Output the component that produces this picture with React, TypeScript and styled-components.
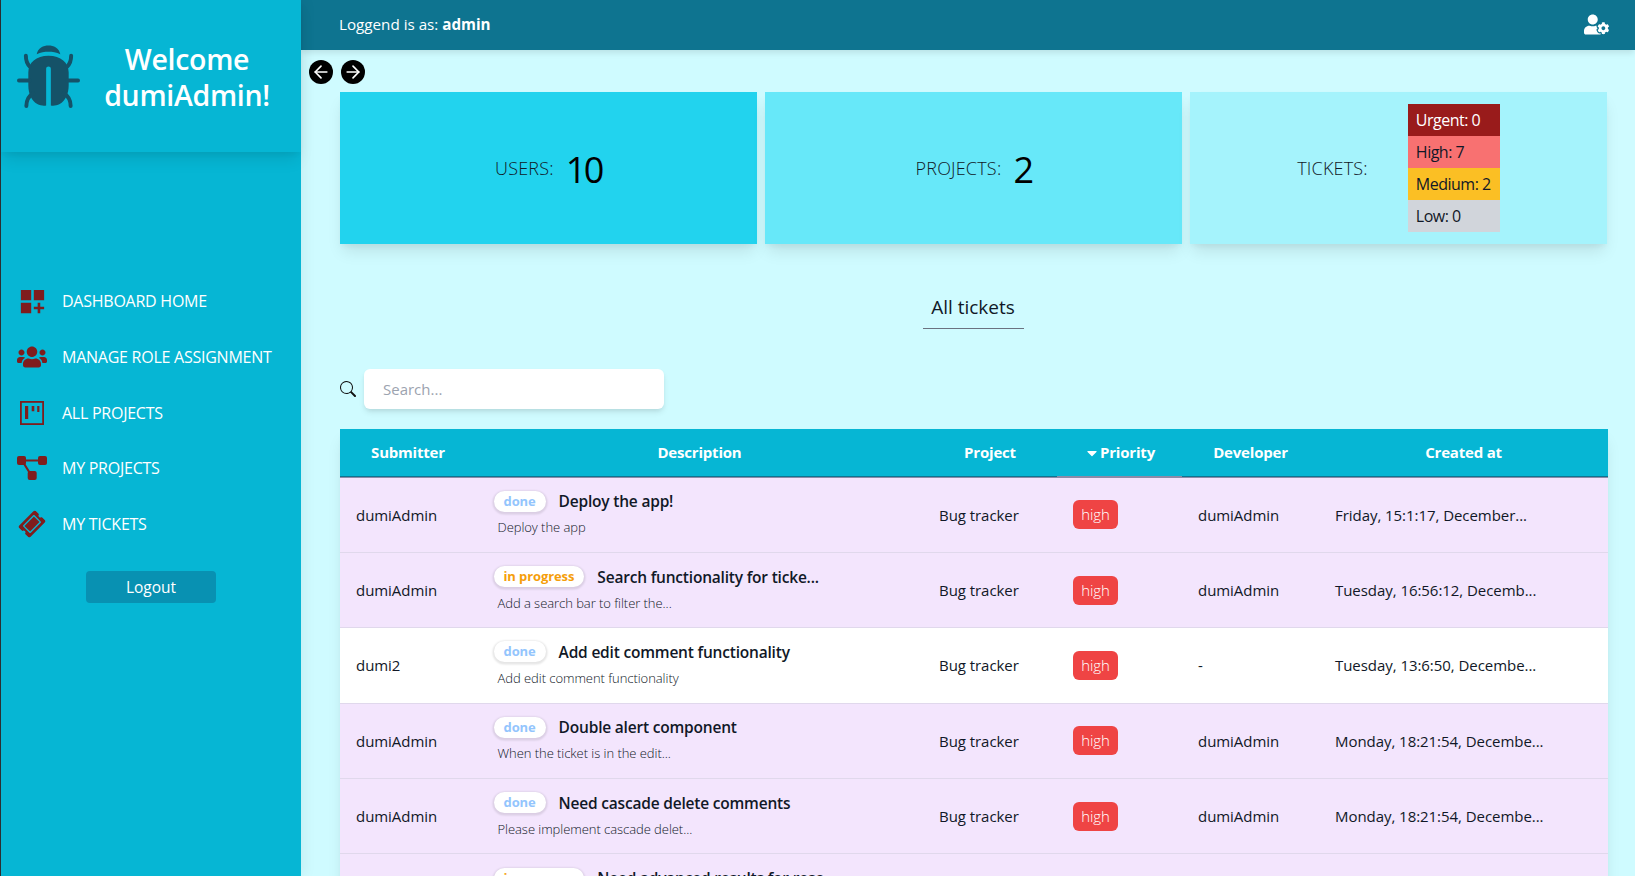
import * as React from "react";
import styled, { createGlobalStyle } from "styled-components";
import { BsSearch } from "react-icons/bs";
import { FiArrowLeft, FiArrowRight } from "react-icons/fi";
import { MdDashboardCustomize } from "react-icons/md";
import { FaUsers, FaUserCog, FaCaretDown, FaTicketAlt } from "react-icons/fa";

const GlobalStyle = createGlobalStyle`
  html, body {
    margin: 0;
    height: 100%;
    overflow: hidden;
    background: #cffbff;
    font-family: "Open Sans", "Noto Sans", "Liberation Sans", sans-serif;
    color: #111827;
  }
  * { box-sizing: border-box; }
`;

const BugIcon = () => (
  <svg width="63" height="63" viewBox="0 0 64 64" fill="#155268" style={{ flex: "none" }}>
    <path d="M20 9.500C21 3 27 0.500 32 0.500s11 2.500 12 9c-4-2-8-2.600-12-2.600s-8 .600-12 2.600z" />
    <path d="M29.600 61.500c-2 .500-6 .300-9-1.500C15 57 11.500 50 11.500 41V28C11.500 18 19.500 11 32 11s20.500 7 20.500 17v13c0 9-3.500 16-9.100 19-3 1.800-7 2-9 1.500V24c0-3-4.800-3-4.800 0z" />
    <g fill="none" stroke="#155268" strokeWidth="4" strokeLinecap="round" strokeLinejoin="round">
      <path d="M9 11c0 4 1 8 4 11M55 11c0 4-1 8-4 11" />
      <path d="M2 36h11M62 36H51" />
      <path d="M9.500 62c0-6 2-10 7-13M54.500 62c0-6-2-10-7-13" />
    </g>
  </svg>
);

const BoardIcon = () => (
  <svg width="24" height="24" viewBox="0 0 24 24">
    <rect x="0.900" y="0.900" width="22.200" height="22.200" fill="none" stroke="#7f1d1d" strokeWidth="1.800" />
    <path fill="#7f1d1d" d="M5 5h3.200v13H5zM11.700 5h2.600v5.200h-2.600zM17.200 5h2.200v6h-2.200z" />
  </svg>
);

const DiagramIcon = () => (
  <svg width="30" height="24" viewBox="0 0 30 24" fill="#7f1d1d">
    <rect x="0" y="0" width="9" height="9" rx="2" />
    <rect x="21" y="0" width="9" height="9" rx="2" />
    <rect x="10.700" y="15" width="9" height="9" rx="2" />
    <path d="M9 3.500h12v2H9zM6.300 8.500l1.800-1 5 8-1.800 1z" />
  </svg>
);

const TicketIcon = styled(FaTicketAlt)`
  transform: rotate(-45deg);
`;

const NAV = [
  { label: "DASHBOARD HOME", icon: <MdDashboardCustomize size={31} /> },
  { label: "MANAGE ROLE ASSIGNMENT", icon: <FaUsers size={30} /> },
  { label: "ALL PROJECTS", icon: <BoardIcon /> },
  { label: "MY PROJECTS", icon: <DiagramIcon /> },
  { label: "MY TICKETS", icon: <TicketIcon size={24} /> },
];

const ROWS = [
  { submitter: "dumiAdmin", status: "done", title: "Deploy the app!", text: "Deploy the app", dev: "dumiAdmin", created: "Friday, 15:1:17, December...", tint: true },
  { submitter: "dumiAdmin", status: "in progress", title: "Search functionality for ticke...", text: "Add a search bar to filter the...", dev: "dumiAdmin", created: "Tuesday, 16:56:12, Decemb...", tint: true },
  { submitter: "dumi2", status: "done", title: "Add edit comment functionality", text: "Add edit comment functionality", dev: "-", created: "Tuesday, 13:6:50, Decembe...", tint: false },
  { submitter: "dumiAdmin", status: "done", title: "Double alert component", text: "When the ticket is in the edit...", dev: "dumiAdmin", created: "Monday, 18:21:54, Decembe...", tint: true },
  { submitter: "dumiAdmin", status: "done", title: "Need cascade delete comments", text: "Please implement cascade delet...", dev: "dumiAdmin", created: "Monday, 18:21:54, Decembe...", tint: true },
  { submitter: "dumiAdmin", status: "in progress", title: "Need advanced results for reso...", text: "Advanced results", dev: "dumiAdmin", created: "Monday, 18:21:54, Decembe...", tint: true },
];

const App = () => (
  <>
    <GlobalStyle />
    <Page>
      <Sidebar>
        <Brand>
          <BugIcon />
          <BrandText>Welcome<br />dumiAdmin!</BrandText>
        </Brand>
        <Nav>
          {NAV.map(({ label, icon }) => (
            <NavItem key={label}>
              <NavIcon>{icon}</NavIcon>
              {label}
            </NavItem>
          ))}
        </Nav>
        <Logout>Logout</Logout>
      </Sidebar>
      <Main>
        <Header>
          <span>Loggend is as: <b>admin</b></span>
          <FaUserCog size={25} color="#fff" />
        </Header>
        <Arrows>
          <RoundButton><FiArrowLeft size={20} /></RoundButton>
          <RoundButton><FiArrowRight size={20} /></RoundButton>
        </Arrows>
        <Content>
          <Cards>
            <Card $bg="#22d3ee">
              <CardLabel>USERS:</CardLabel>
              <CardValue>10</CardValue>
            </Card>
            <Card $bg="#67e8f9">
              <CardLabel>PROJECTS:</CardLabel>
              <CardValue>2</CardValue>
            </Card>
            <Card $bg="#a5f3fc">
              <CardLabel>TICKETS:</CardLabel>
              <Counts>
                <Count $bg="#991b1b" $fg="#fff">Urgent: 0</Count>
                <Count $bg="#f87171">High: 7</Count>
                <Count $bg="#fbbf24">Medium: 2</Count>
                <Count $bg="#d1d5db">Low: 0</Count>
              </Counts>
            </Card>
          </Cards>
          <TitleRow><Title>All tickets</Title></TitleRow>
          <SearchRow>
            <BsSearch size={16} color="#111" />
            <SearchInput placeholder="Search..." readOnly />
          </SearchRow>
          <Table>
            <colgroup>
              <col style={{ width: 136 }} />
              <col style={{ width: 447 }} />
              <col style={{ width: 134 }} />
              <col style={{ width: 125 }} />
              <col style={{ width: 137 }} />
              <col />
            </colgroup>
            <thead>
              <tr>
                <Th>Submitter</Th>
                <Th>Description</Th>
                <Th>Project</Th>
                <Th $active><SortCaret size={16} />Priority</Th>
                <Th>Developer</Th>
                <Th>Created at</Th>
              </tr>
            </thead>
            <tbody>
              {ROWS.map((r) => (
                <Row key={r.title} $tint={r.tint}>
                  <Td>{r.submitter}</Td>
                  <DescriptionCell>
                    <TitleLine>
                      <Status $progress={r.status !== "done"}>{r.status}</Status>
                      <TicketTitle>{r.title}</TicketTitle>
                    </TitleLine>
                    <TicketText>{r.text}</TicketText>
                  </DescriptionCell>
                  <Td>Bug tracker</Td>
                  <Td><Priority>high</Priority></Td>
                  <Td>{r.dev}</Td>
                  <Td>{r.created}</Td>
                </Row>
              ))}
            </tbody>
          </Table>
        </Content>
      </Main>
    </Page>
  </>
);

const Page = styled.div`
  display: flex;
  height: 876px;
  overflow: hidden;
`;

const Sidebar = styled.aside`
  flex: 0 0 301px;
  border-left: 1px solid #2b2f33;
  background: #06b6d4;
  color: #fff;
  position: relative;
  z-index: 1;
  box-shadow: 4px 0 12px rgba(0, 0, 0, 0.05);
`;

const Brand = styled.div`
  height: 152px;
  display: flex;
  align-items: center;
  padding: 0 0 0 16px;
  box-shadow: 0 10px 15px -3px rgba(0, 0, 0, 0.1), 0 4px 6px -2px rgba(0, 0, 0, 0.05);
`;

const BrandText = styled.div`
  flex: 1;
  padding: 2px 7px 0 0;
  text-align: center;
  font-size: 28.500px;
  font-weight: 600;
  line-height: 36px;
  letter-spacing: -0.3px;
`;

const Nav = styled.nav`
  margin-top: 121.300px;
  display: flex;
  flex-direction: column;
`;

const NavItem = styled.div`
  height: 55.700px;
  display: flex;
  align-items: center;
  gap: 14px;
  padding-left: 15px;
  font-size: 16px;
  letter-spacing: -0.25px;
`;

const NavIcon = styled.span`
  display: flex;
  width: 32px;
  justify-content: center;
  color: #7f1d1d;
`;

const Logout = styled.button`
  display: block;
  margin: 19.500px auto 0;
  width: 130px;
  height: 32px;
  border: 0;
  border-radius: 4px;
  background: #0891b2;
  color: #fff;
  font: 15.500px "Open Sans", sans-serif;
`;

const Main = styled.main`
  flex: 1;
  min-width: 0;
`;

const Header = styled.header`
  height: 50px;
  display: flex;
  align-items: center;
  justify-content: space-between;
  padding: 0 26px 2px 38px;
  background: #0e7490;
  color: #fff;
  font-size: 15.200px;
  box-shadow: 0 4px 6px -1px rgba(0, 0, 0, 0.1);
`;

const Arrows = styled.div`
  display: flex;
  gap: 8px;
  padding: 10px 0 0 8px;
`;

const RoundButton = styled.span`
  width: 24px;
  height: 24px;
  border-radius: 50%;
  background: #000;
  color: #fff;
  display: flex;
  align-items: center;
  justify-content: center;
`;

const Content = styled.div`
  padding: 8px 27px 0 39px;
`;

const Cards = styled.div`
  display: grid;
  grid-template-columns: repeat(3, 417px);
  gap: 8px;
`;

const Card = styled.div<{ $bg: string }>`
  height: 152px;
  display: flex;
  align-items: center;
  justify-content: center;
  gap: 12px;
  background: ${(p) => p.$bg};
  box-shadow: 0 10px 15px -3px rgba(0, 0, 0, 0.1), 0 4px 6px -2px rgba(0, 0, 0, 0.05);
`;

const CardLabel = styled.span`
  font-size: 18px;
  font-weight: 300;
  letter-spacing: 0.2px;
`;

const CardValue = styled.span`
  padding-top: 4px;
  font-size: 36px;
  line-height: 40px;
  letter-spacing: -2.500px;
  color: #000;
`;

const Counts = styled.div`
  display: flex;
  flex-direction: column;
  margin-left: 28px;
  width: 92px;
`;

const Count = styled.div<{ $bg: string; $fg?: string }>`
  height: 32px;
  line-height: 33px;
  padding-left: 8px;
  font-size: 16px;
  letter-spacing: -0.5px;
  white-space: nowrap;
  background: ${(p) => p.$bg};
  color: ${(p) => p.$fg || "#111827"};
`;

const TitleRow = styled.div`
  display: flex;
  justify-content: center;
  padding: 48px 2px 0 0;
`;

const Title = styled.h2`
  margin: 0;
  width: 101px;
  height: 37px;
  text-align: center;
  font-size: 19px;
  font-weight: 400;
  line-height: 30px;
  border-bottom: 1px solid #6b7280;
`;

const SearchRow = styled.div`
  display: flex;
  align-items: center;
  gap: 8px;
  padding-top: 40px;
`;

const SearchInput = styled.input`
  width: 300px;
  height: 40px;
  border: 0;
  outline: 0;
  border-radius: 6px;
  padding: 0 19px;
  background: #fff;
  font: 15px "Open Sans", sans-serif;
  box-shadow: 0 4px 6px -1px rgba(0, 0, 0, 0.1), 0 2px 4px -1px rgba(0, 0, 0, 0.06);
  &::placeholder { color: #9ca3af; }
`;

const Table = styled.table`
  margin-top: 20px;
  width: 1268px;
  border-collapse: collapse;
  table-layout: fixed;
  box-shadow: 0 10px 15px -3px rgba(0, 0, 0, 0.1), 0 4px 6px -2px rgba(0, 0, 0, 0.05);
`;

const Th = styled.th<{ $active?: boolean }>`
  height: 48px;
  padding: 0 16px 1px;
  background: #06b6d4;
  color: #fff;
  font-size: 15px;
  font-weight: 700;
  letter-spacing: -0.2px;
  text-align: center;
  border-bottom: 1px solid #8b8ba7;
  box-shadow: inset 0 -1px 0 ${(p) => (p.$active ? "#8b8ba7" : "#0e7490")};
`;

const SortCaret = styled(FaCaretDown)`
  vertical-align: -3px;
`;

const Row = styled.tr<{ $tint: boolean }>`
  height: 75.400px;
  background: ${(p) => (p.$tint ? "#f3e5fd" : "#fff")};
  border-bottom: 1px solid #e0d8ec;
`;

const Td = styled.td`
  padding: 0 16px;
  font-size: 15px;
  letter-spacing: -0.05px;
  white-space: nowrap;
  color: #111827;
`;

const DescriptionCell = styled(Td)`
  padding: 0 16px 3px 17.500px;
`;

const TitleLine = styled.div`
  display: flex;
  align-items: center;
  gap: 13px;
`;

const Status = styled.span<{ $progress: boolean }>`
  padding: 0 10px;
  height: 21px;
  line-height: 20px;
  border-radius: 11px;
  background: #fff;
  font-size: 13px;
  font-weight: 700;
  letter-spacing: -0.1px;
  color: ${(p) => (p.$progress ? "#f59e0b" : "#93c5fd")};
  box-shadow: 0 1px 2px 1.500px rgba(0, 0, 0, 0.1);
`;

const TicketTitle = styled.span`
  font-size: 15.500px;
  font-weight: 600;
  letter-spacing: -0.2px;
`;

const TicketText = styled.div`
  margin: 6px 0 0 4px;
  font-size: 13px;
  font-weight: 300;
`;

const Priority = styled.span`
  display: inline-block;
  width: 45px;
  height: 29px;
  line-height: 29px;
  text-align: center;
  border-radius: 6px;
  background: #ef4444;
  color: #fff;
  font-weight: 300;
`;

export default App;
